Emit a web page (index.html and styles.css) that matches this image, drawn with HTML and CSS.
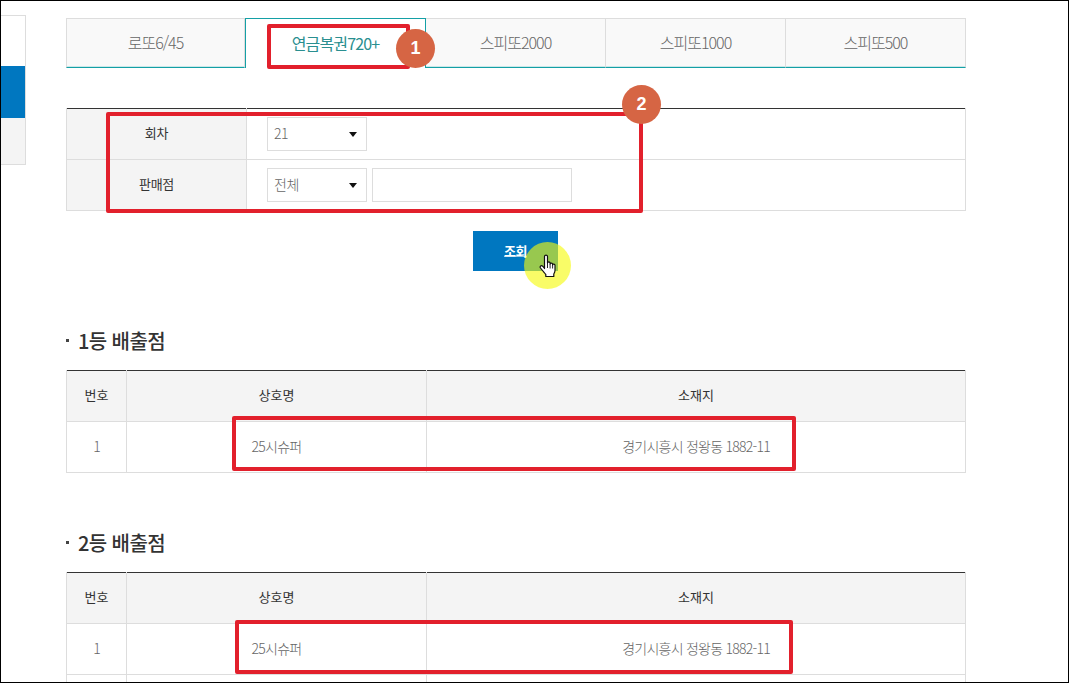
FILE: index.html
```html
<!DOCTYPE html>
<html lang="ko">
<head>
<meta charset="utf-8">
<title>당첨 판매점 조회</title>
<link rel="stylesheet" href="styles.css">
</head>
<body>
<div class="frame">
  <aside class="side">
    <div class="side-item"></div>
    <div class="side-item side-active"></div>
    <div class="side-item side-muted"></div>
  </aside>
  <main class="main">
    <nav class="tabs">
      <a class="tab">로또6/45</a>
      <a class="tab tab-active">연금복권720+</a>
      <a class="tab">스피또2000</a>
      <a class="tab">스피또1000</a>
      <a class="tab">스피또500</a>
    </nav>

    <table class="grid search">
      <colgroup><col class="c-label"><col></colgroup>
      <tr>
        <th>회차</th>
        <td><div class="controls"><div class="select"><span class="select-value">21</span></div></div></td>
      </tr>
      <tr>
        <th>판매점</th>
        <td><div class="controls"><div class="select"><span class="select-value">전체</span></div><input class="text-input" type="text"></div></td>
      </tr>
    </table>

    <div class="actions"><button class="btn" type="button">조회</button></div>

    <h3 class="heading first">1등 배출점</h3>
    <table class="grid result">
      <colgroup><col class="c-no"><col class="c-name"><col></colgroup>
      <tr><th>번호</th><th>상호명</th><th>소재지</th></tr>
      <tr><td>1</td><td>25시슈퍼</td><td>경기시흥시 정왕동 1882-11</td></tr>
    </table>

    <h3 class="heading">2등 배출점</h3>
    <table class="grid result">
      <colgroup><col class="c-no"><col class="c-name"><col></colgroup>
      <tr><th>번호</th><th>상호명</th><th>소재지</th></tr>
      <tr><td>1</td><td>25시슈퍼</td><td>경기시흥시 정왕동 1882-11</td></tr>
      <tr><td>&nbsp;</td><td></td><td></td></tr>
    </table>
  </main>

  <div class="mark box1"></div>
  <div class="mark box2"></div>
  <div class="mark box3"></div>
  <div class="mark box4"></div>
  <div class="badge badge1">1</div>
  <div class="badge badge2">2</div>
  <div class="halo"></div>
  <svg class="hand" width="18" height="24" viewBox="0 0 18 24" aria-hidden="true">
    <path d="M5.500 14.500V2.600c0-2 3-2 3 0V9c0-1.400 2.600-1.400 2.600 0v1c0-1.300 2.500-1.300 2.500 0v1c0-1.200 2.400-1.200 2.400 .3v5.200c0 1.500-.6 2.500-1.200 3.500v2.500H6.800v-2c-1.300-1.500-3.300-4-5.300-6.500-1.100-1.500.8-3 2.200-1.800z" fill="#fff" stroke="#111" stroke-width="1.200" stroke-linejoin="round"/>
    <path d="M8.500 9v5M11.100 10v4.500M13.600 11v3.500" fill="none" stroke="#111" stroke-width=".9"/>
  </svg>
</div>
</body>
</html>
```
FILE: styles.css
```css
* { box-sizing: border-box; }
html, body { margin: 0; padding: 0; background: #fff; }
body {
  font-family: "Noto Sans CJK KR", "Noto Sans", sans-serif;
  font-size: 13px;
  color: #333;
}
.frame {
  position: relative;
  display: flex;
  align-items: flex-start;
  width: 1069px;
  height: 683px;
  border: 1px solid #000;
  overflow: hidden;
}
.side {
  flex: none;
  width: 25px;
  margin-top: 14px;
  border: 1px solid #ddd;
  border-left: 0;
}
.side-item { height: 50px; background: #fff; }
.side-active { height: 52px; background: #0077c0; }
.side-muted { height: 46px; background: #f4f4f4; }
.main {
  flex: none;
  width: 900px;
  margin-left: 40px;
  padding-top: 17px;
}
.tabs {
  display: grid;
  grid-template-columns: 179px 181px 180px 180px 180px;
  height: 50px;
}
.tab {
  display: flex;
  align-items: center;
  justify-content: center;
  padding-bottom: 2px;
  font-size: 16px;
  font-weight: 300;
  letter-spacing: -1px;
  color: #666;
  background: #f9f9f9;
  border: 1px solid #ddd;
  border-left: 0;
  border-bottom: 1px solid #14a0a6;
  box-shadow: inset 0 -1px 0 rgba(20, 160, 166, 0.2);
}
.tab:first-child { border-left: 1px solid #ddd; }
.tab-active {
  font-weight: 400;
  letter-spacing: -0.85px;
  color: #2a8f90;
  background: #fff;
  border: 1px solid #14a0a6;
  border-bottom: 0;
  box-shadow: none;
}
.grid {
  width: 900px;
  table-layout: fixed;
  border-collapse: collapse;
  border-top: 1px solid #333;
}
.grid th, .grid td {
  height: 51px;
  padding: 0 0 4px;
  border: 1px solid #ddd;
  font-size: 13px;
  text-align: center;
}
.grid tr:first-child th, .grid tr:first-child td { border-top: 0; }
.grid th { font-weight: 400; color: #333; background: #f4f4f4; letter-spacing: 0; }
.grid td { padding-bottom: 2px; font-size: 14px; font-weight: 300; color: #666; letter-spacing: -0.75px; }
.search { margin-top: 40px; }
.search th { letter-spacing: -0.3px; }
.c-label { width: 180px; }
.c-no { width: 60px; }
.c-name { width: 300px; }
.search td { padding: 0 0 0 20px; }
.controls { display: flex; gap: 5px; }
.select {
  position: relative;
  width: 100px;
  height: 34px;
  padding-left: 6px;
  border: 1px solid #ddd;
  font-size: 14px;
  line-height: 31px;
  letter-spacing: -0.5px;
  text-align: left;
  color: #666;
  background: #fff;
}
.select::after {
  content: "";
  position: absolute;
  top: 14px;
  right: 9px;
  border-style: solid;
  border-width: 5px 4px 0;
  border-color: #111 transparent transparent;
}
.text-input {
  width: 200px;
  height: 34px;
  padding: 0;
  border: 1px solid #ddd;
  background: #fff;
}
.actions {
  display: flex;
  justify-content: center;
  margin-top: 20px;
  padding-right: 1px;
}
.btn {
  width: 85px;
  height: 40px;
  padding: 0 0 2px;
  border: 0;
  font-family: inherit;
  font-size: 13px;
  font-weight: 700;
  letter-spacing: -0.5px;
  color: #fff;
  text-decoration: underline rgba(255, 255, 255, 0.6) 1px;
  text-underline-offset: 0;
  background: #0077c0;
}
.heading {
  display: flex;
  align-items: center;
  gap: 9px;
  height: 30px;
  margin: 55px 0 14px;
  padding-bottom: 2px;
  font-size: 20px;
  font-weight: 500;
  letter-spacing: -0.6px;
  color: #333;
}
.heading::before {
  content: "";
  width: 3px;
  height: 3px;
  background: #444;
}

.mark {
  position: absolute;
  border: 4px solid #e2202c;
  border-radius: 2px;
}
.box1 { left: 266px; top: 23px; width: 143px; height: 45px; }
.box2 { left: 105px; top: 111px; width: 537px; height: 101px; }
.box3 { left: 231px; top: 415px; width: 564px; height: 55px; }
.box4 { left: 234px; top: 619px; width: 558px; height: 54px; }
.badge {
  position: absolute;
  width: 39px;
  height: 39px;
  border-radius: 50%;
  font-family: "Liberation Sans", sans-serif;
  font-size: 18px;
  font-weight: 700;
  line-height: 39px;
  text-align: center;
  color: #fff;
  background: #d66544;
}
.badge1 { left: 395px; top: 28px; }
.badge2 { left: 621px; top: 84px; }
.halo {
  position: absolute;
  left: 523px;
  top: 241px;
  width: 47px;
  height: 47px;
  border-radius: 50%;
  background: rgba(245, 250, 10, 0.62);
}
.hand {
  position: absolute;
  left: 538px;
  top: 253px;
}
```
